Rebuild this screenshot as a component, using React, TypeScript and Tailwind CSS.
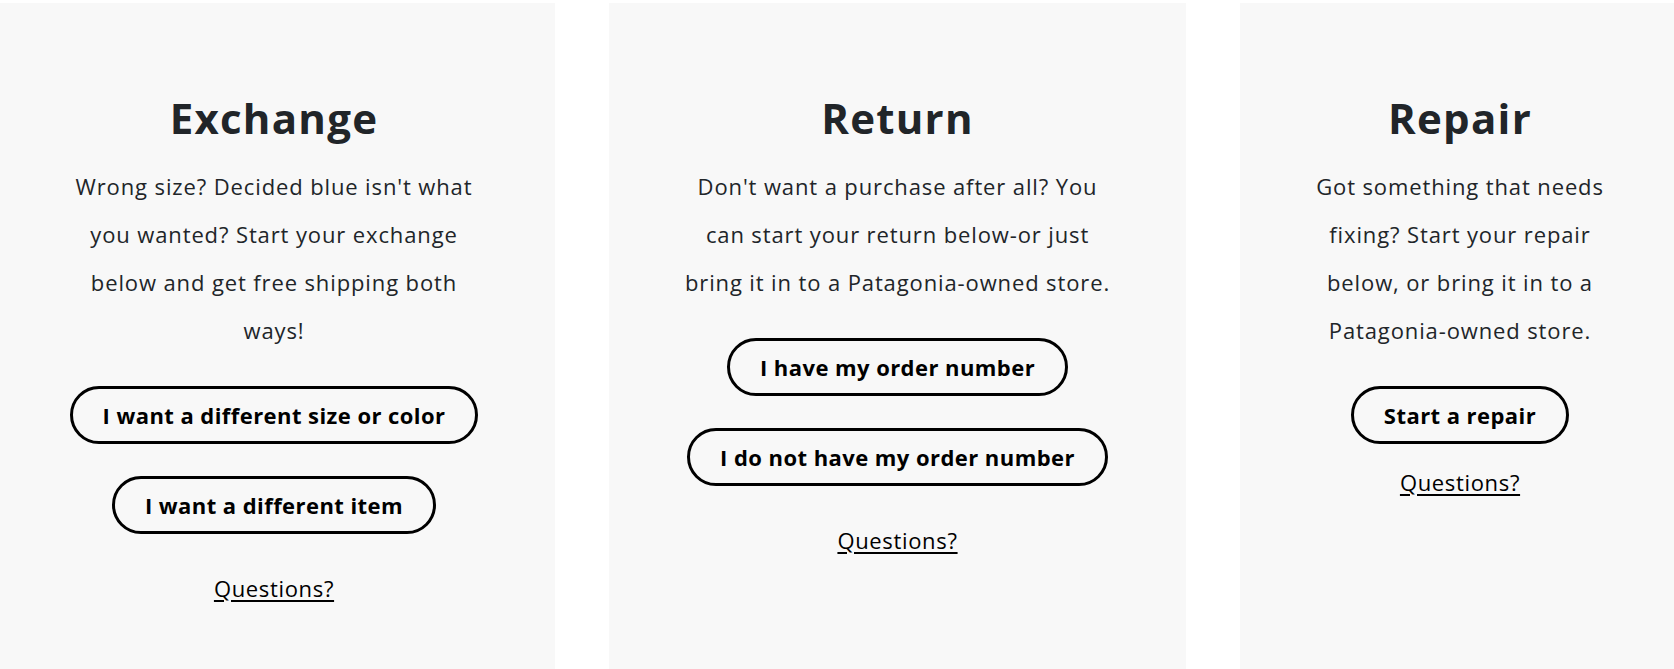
import React from 'react';

type Option = {
  title: string;
  text: string;
  textWidth: string;
  buttons: string[];
  questionsGap: string;
};

const options: Option[] = [
  {
    title: 'Exchange',
    text: "Wrong size? Decided blue isn't what you wanted? Start your exchange below and get free shipping both ways!",
    textWidth: 'w-[415px]',
    buttons: ['I want a different size or color', 'I want a different item'],
    questionsGap: 'mt-[41px]',
  },
  {
    title: 'Return',
    text: "Don't want a purchase after all? You can start your return below-or just bring it in to a Patagonia-owned store.",
    textWidth: 'w-[432px]',
    buttons: ['I have my order number', 'I do not have my order number'],
    questionsGap: 'mt-[41px]',
  },
  {
    title: 'Repair',
    text: 'Got something that needs fixing? Start your repair below, or bring it in to a Patagonia-owned store.',
    textWidth: 'w-[296px]',
    buttons: ['Start a repair'],
    questionsGap: 'mt-[25px]',
  },
];

const panelWidths = ['w-[555px] pr-[7px]', 'w-[577px]', 'flex-1 pl-[6px]'];

const OptionPanel = ({ option, width }: { option: Option; width: string }) => {
  return (
    <div className={`${width} bg-[#f8f8f8] pt-[90px] flex flex-col items-center text-center`}>
      <h2 className="text-[42px] leading-[50px] font-bold text-[#212529] tracking-[0.03em]">{option.title}</h2>

      <p className={`${option.textWidth} mt-[19px] text-[22px] leading-[48px] text-[#212529] tracking-[0.04em]`}>
        {option.text}
      </p>

      {/* Buttons */}
      <div className="mt-[32px] flex flex-col items-center gap-[32px]">
        {option.buttons.map((label) => (
          <button
            key={label}
            className="rounded-full border-[3px] border-black px-[30px] py-[13px] text-[22px] leading-[26px] font-bold text-black tracking-[0.02em]"
          >
            {label}
          </button>
        ))}
      </div>

      <a
        href="#"
        className={`${option.questionsGap} text-[22px] leading-[26px] text-black underline underline-offset-[3px] tracking-[0.03em]`}
      >
        Questions?
      </a>
    </div>
  );
};

const App = () => {
  return (
    <div
      className="w-[1674px] h-[669px] bg-white pt-[3px] flex gap-[54px] overflow-hidden"
      style={{ fontFamily: '"Open Sans", Lato, sans-serif' }}
    >
      {options.map((option, idx) => (
        <OptionPanel key={option.title} option={option} width={panelWidths[idx]} />
      ))}
    </div>
  );
};

export default App;
